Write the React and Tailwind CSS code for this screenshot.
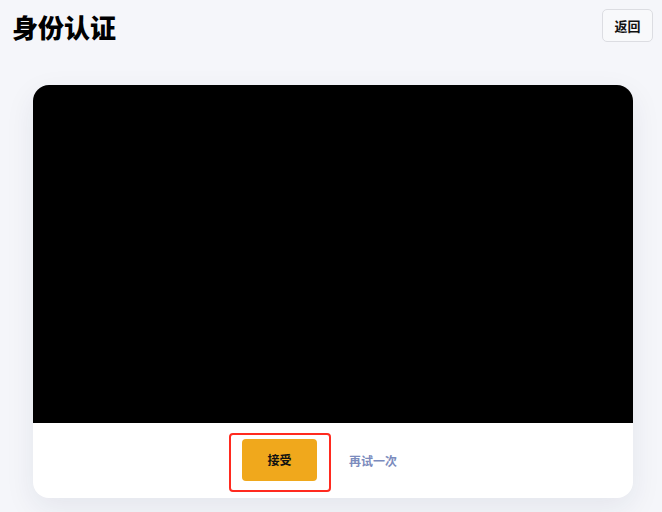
export default function App() {
  return (
    <div
      className="min-h-[512px] bg-[#f5f6fa] text-[#111]"
      style={{ fontFamily: '"Noto Sans CJK SC", "Noto Sans", sans-serif' }}
    >
      {/* ---------- Header ---------- */}
      <div className="flex items-start justify-between pl-[12px] pr-[9px] pt-[9px]">
        <h1 className="mt-[2px] text-[26px] font-black leading-[32px] text-black">
          身份认证
        </h1>
        <button className="h-[33px] w-[51px] rounded-[5px] border border-[#dcdde2] bg-[#f8f9fb] text-[13px] font-bold leading-none">
          返回
        </button>
      </div>

      {/* ---------- Card ---------- */}
      <div className="ml-[33px] mt-[42px] w-[600px] overflow-hidden rounded-[16px] bg-white shadow-[0_10px_30px_rgba(30,40,80,0.08)]">
        <div className="h-[338px] bg-black" />
        <div className="flex h-[75px] items-start pl-[196px] pt-[10px]">
          <div className="rounded-[4px] border-2 border-[#ff2a1f] pb-[9px] pl-[11px] pr-[12px] pt-[4px]">
            <button className="h-[42px] w-[75px] rounded-[4px] bg-[#f0a81c] text-[12px] font-bold text-[#111]">
              接受
            </button>
          </div>
          <button className="ml-[18px] mt-[20px] text-[12px] font-bold leading-[16px] text-[#7b8bbd]">
            再试一次
          </button>
        </div>
      </div>
    </div>
  );
}
